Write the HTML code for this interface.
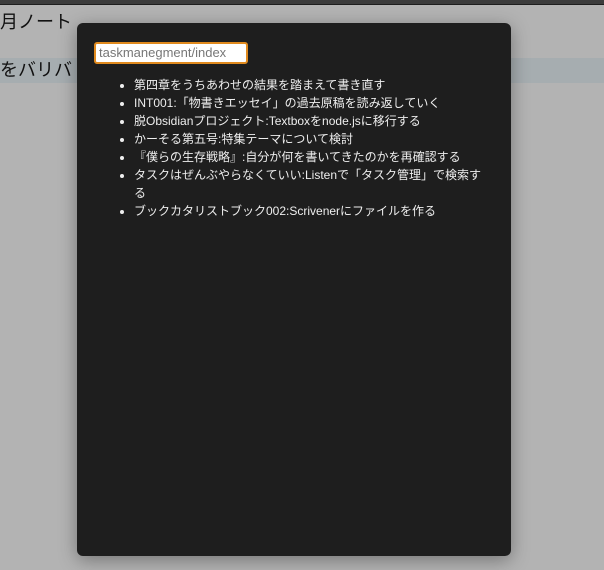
<!DOCTYPE html>
<html><head><meta charset="utf-8"><style>
html,body{margin:0;padding:0;width:604px;height:570px;overflow:hidden;background:#b3b3b3;font-family:"Liberation Sans","Noto Sans CJK JP",sans-serif;position:relative}
.top{position:absolute;left:0;top:0;width:604px;height:4px;background:#3c3c3c;border-bottom:1px solid #1e1e1e}
.t1{position:absolute;left:0;top:8px;font-size:18px;color:#111}
.band{position:absolute;left:0;top:58px;width:604px;height:25px;background:#a6adb0}
.t2{position:absolute;left:0;top:58px;font-size:18px;color:#111;line-height:25px}
.dlg{position:absolute;left:77px;top:23px;width:434px;height:533px;background:#1e1e1e;border-radius:6px;box-shadow:0 4px 18px rgba(0,0,0,.35)}
.inp{position:absolute;left:17px;top:19px;width:147px;height:18px;border:2px solid #e08a1e;border-radius:3px;background:#fff;font-size:13px;color:#777;line-height:18px;padding-left:3px}
ul{position:absolute;left:57px;top:53px;margin:0;padding:0;width:352px;color:#eee;font-size:12px;line-height:18px}
li{margin:0;padding:0}
</style></head><body>
<div class="top"></div>
<div class="t1">月ノート</div>
<div class="band"></div>
<div class="t2">をバリバ</div>
<div class="dlg">
<div class="inp">taskmanegment/index</div>
<ul>
<li>第四章をうちあわせの結果を踏まえて書き直す</li>
<li>INT001:「物書きエッセイ」の過去原稿を読み返していく</li>
<li>脱Obsidianプロジェクト:Textboxをnode.jsに移行する</li>
<li>かーそる第五号:特集テーマについて検討</li>
<li>『僕らの生存戦略』:自分が何を書いてきたのかを再確認する</li>
<li>タスクはぜんぶやらなくていい:Listenで「タスク管理」で検索する</li>
<li>ブックカタリストブック002:Scrivenerにファイルを作る</li>
</ul>
</div>
</body></html>
